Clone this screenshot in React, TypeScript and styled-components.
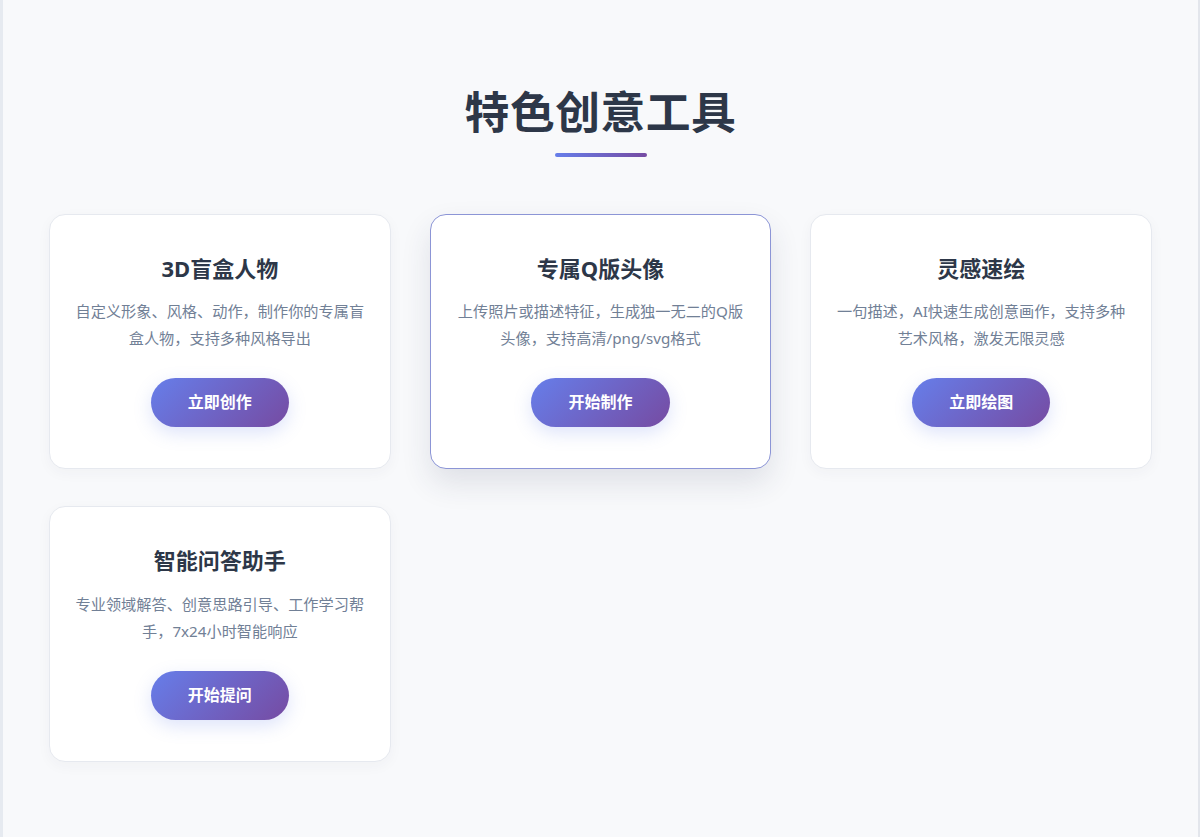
import React from 'react';
import styled, { createGlobalStyle } from 'styled-components';

interface Tool {
  title: string;
  desc: string;
  action: string;
  active?: boolean;
}

const tools: Tool[] = [
  {
    title: '3D盲盒人物',
    desc: '自定义形象、风格、动作，制作你的专属盲盒人物，支持多种风格导出',
    action: '立即创作',
  },
  {
    title: '专属Q版头像',
    desc: '上传照片或描述特征，生成独一无二的Q版头像，支持高清/png/svg格式',
    action: '开始制作',
    active: true,
  },
  {
    title: '灵感速绘',
    desc: '一句描述，AI快速生成创意画作，支持多种艺术风格，激发无限灵感',
    action: '立即绘图',
  },
  {
    title: '智能问答助手',
    desc: '专业领域解答、创意思路引导、工作学习帮手，7x24小时智能响应',
    action: '开始提问',
  },
];

const GlobalStyle = createGlobalStyle`
  html, body {
    margin: 0;
    padding: 0;
    background: #f8f9fb;
  }
  body {
    font-family: "Noto Sans", "Noto Sans CJK SC", sans-serif;
    -webkit-font-smoothing: antialiased;
  }
`;

const Page = styled.div`
  min-height: 837px;
  box-sizing: border-box;
  background: #f8f9fb;
  border-left: 3px solid #e6eaf0;
  border-right: 2px solid #e3e6ec;
`;

const Section = styled.section`
  padding: 85px 46px 60px;
`;

const Heading = styled.h2`
  margin: 0;
  text-align: center;
  font-size: 44.8px;
  line-height: 1.2;
  font-weight: 700;
  color: #2d3748;
  letter-spacing: 0.5px;
`;

const Underline = styled.div`
  width: 92px;
  height: 4px;
  margin: 14px auto 57px;
  border-radius: 2px;
  background: linear-gradient(90deg, #667eea, #764ba2);
`;

const Grid = styled.div`
  display: grid;
  grid-template-columns: repeat(3, 1fr);
  gap: 37px 39px;
`;

const Card = styled.div<{ $active?: boolean }>`
  background: #fff;
  border: 1px solid ${({ $active }) => ($active ? '#8c95d6' : '#e6e9ef')};
  border-radius: 16px;
  padding: 39px 24px 41px;
  text-align: center;
  box-shadow: ${({ $active }) =>
    $active ? '0 14px 30px rgba(40, 50, 80, 0.12)' : '0 4px 14px rgba(40, 50, 80, 0.04)'};
`;

const CardTitle = styled.h3`
  margin: 0 0 15px;
  font-size: 22px;
  line-height: 1.35;
  font-weight: 700;
  color: #2d3748;
`;

const CardDesc = styled.p`
  margin: 0 0 26px;
  font-size: 15.2px;
  line-height: 27px;
  color: #718096;
`;

const ActionButton = styled.button`
  border: none;
  border-radius: 30px;
  padding: 14px 37px;
  font-family: inherit;
  font-size: 16px;
  line-height: 21px;
  font-weight: 700;
  color: #fff;
  cursor: pointer;
  background: linear-gradient(135deg, #667eea 0%, #764ba2 100%);
  box-shadow: 0 6px 18px rgba(102, 126, 234, 0.22);
`;

const App: React.FC = () => (
  <>
    <GlobalStyle />
    <Page>
      <Section>
        <Heading>特色创意工具</Heading>
        <Underline />
        <Grid>
          {tools.map((tool) => (
            <Card key={tool.title} $active={tool.active}>
              <CardTitle>{tool.title}</CardTitle>
              <CardDesc>{tool.desc}</CardDesc>
              <ActionButton>{tool.action}</ActionButton>
            </Card>
          ))}
        </Grid>
      </Section>
    </Page>
  </>
);

export default App;
